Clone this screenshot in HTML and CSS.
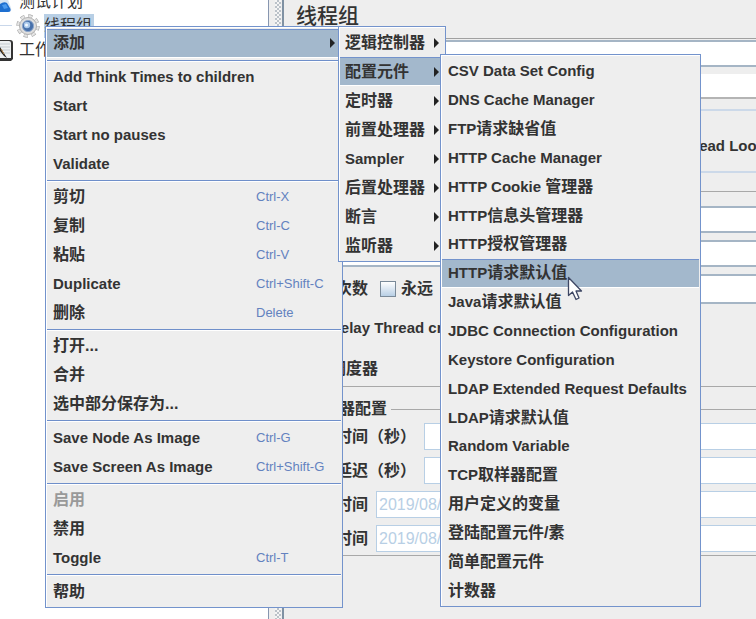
FILE: index.html
```html
<!DOCTYPE html>
<html lang="zh-CN">
<head>
<meta charset="utf-8">
<title>线程组</title>
<link rel="stylesheet" href="styles.css">
</head>
<body>
<div class="window">
  <nav class="tree">
    <div class="node">
      <svg class="icon" width="16" height="24" viewBox="0 0 16 24"><path d="M0 4H6L11 18Q12 22 8 22H0Z" fill="#d5e3f2"/><path d="M0 14Q4 11 7 13L10.500 19Q11 22 8 22H0Z" fill="#1e6fd0"/><path d="M2 15L6 14L8 18L4 19Z" fill="#4b9bf0"/></svg>
      <span class="node-label">测试计划</span>
    </div>
    <div class="node child">
      <svg class="gear" width="24" height="24" viewBox="0 0 24 24"><circle cx="12" cy="12" r="9.7" fill="none" stroke="#a9a9a9" stroke-width="4" stroke-dasharray="4.1 3.5"/><circle cx="12" cy="12" r="9.7" fill="none" stroke="#e6e6e6" stroke-width="2.6" stroke-dasharray="3.3 4.3" stroke-dashoffset="-.4"/><circle cx="12" cy="12" r="8.5" fill="#dedede" stroke="#b2b2b2"/><circle cx="12" cy="12" r="5.6" fill="#4770aa" stroke="#8ba5ca"/><circle cx="11" cy="11" r="3.2" fill="#a9c8eb"/><circle cx="10.500" cy="11" r="1.500" fill="#f2f8ff"/></svg>
      <span class="node-label selected">线程组</span>
    </div>
    <div class="node">
      <svg class="icon" width="16" height="24" viewBox="0 0 16 24"><path d="M0 2H10Q13 2 13 5V21L11 23H0" fill="#333"/><path d="M0 3H9Q11 3 11 5V20H0Z" fill="#edf0f2"/><path d="M0 6H10M0 9H10M0 12H10M0 15H10" stroke="#c5ccd2"/><path d="M0 9L7 20L4 18L0 13" fill="#222"/><path d="M1 11L4 16" stroke="#b6864a"/></svg>
      <span class="node-label">工作台</span>
    </div>
  </nav>
  <div class="divider"><div class="grip"></div></div>
  <main class="editor">
    <h1 class="title">线程组</h1>
    <input class="field name" type="text" aria-label="名称">
    <input class="comment" type="text" aria-label="注释">
    <section class="on-error">
      <label class="choice"><input type="radio" name="error">Start Next Thread Loop</label>
    </section>
    <section class="properties">
      <input class="field" type="text" aria-label="线程数">
      <input class="field" type="text" aria-label="Ramp-Up">
      <div class="row loops">
        <label for="loops">循环次数</label>
        <label class="choice cjk"><input type="checkbox">永远</label>
        <input class="field" id="loops" type="text">
      </div>
      <label class="choice line"><input type="checkbox">Delay Thread creation</label>
      <label class="choice line cjk"><input type="checkbox">调度器</label>
    </section>
    <fieldset class="scheduler">
      <legend>调度器配置</legend>
      <div class="row"><label for="duration">持续时间（秒）</label><input class="field pale" id="duration" type="text"></div>
      <div class="row"><label for="delay">启动延迟（秒）</label><input class="field pale" id="delay" type="text"></div>
      <div class="row"><label for="start">启动时间</label><input class="field pale" id="start" type="text" value="2019/08/08"></div>
      <div class="row"><label for="end">结束时间</label><input class="field pale" id="end" type="text" value="2019/08/08"></div>
    </fieldset>
  </main>
</div>

<div class="menu main-menu" role="menu">
  <button class="item cjk active">添加<i class="arrow"></i></button>
  <hr>
  <button class="item">Add Think Times to children</button>
  <button class="item">Start</button>
  <button class="item">Start no pauses</button>
  <button class="item">Validate</button>
  <hr>
  <button class="item cjk">剪切<kbd>Ctrl-X</kbd></button>
  <button class="item cjk">复制<kbd>Ctrl-C</kbd></button>
  <button class="item cjk">粘贴<kbd>Ctrl-V</kbd></button>
  <button class="item">Duplicate<kbd>Ctrl+Shift-C</kbd></button>
  <button class="item cjk">删除<kbd>Delete</kbd></button>
  <hr>
  <button class="item cjk">打开...</button>
  <button class="item cjk">合并</button>
  <button class="item cjk">选中部分保存为...</button>
  <hr>
  <button class="item">Save Node As Image<kbd>Ctrl-G</kbd></button>
  <button class="item">Save Screen As Image<kbd>Ctrl+Shift-G</kbd></button>
  <hr>
  <button class="item cjk" disabled>启用</button>
  <button class="item cjk">禁用</button>
  <button class="item">Toggle<kbd>Ctrl-T</kbd></button>
  <hr>
  <button class="item cjk">帮助</button>
</div>

<div class="menu add-menu" role="menu">
  <button class="item cjk">逻辑控制器<i class="arrow"></i></button>
  <button class="item cjk active">配置元件<i class="arrow"></i></button>
  <button class="item cjk">定时器<i class="arrow"></i></button>
  <button class="item cjk">前置处理器<i class="arrow"></i></button>
  <button class="item">Sampler<i class="arrow"></i></button>
  <button class="item cjk">后置处理器<i class="arrow"></i></button>
  <button class="item cjk">断言<i class="arrow"></i></button>
  <button class="item cjk">监听器<i class="arrow"></i></button>
</div>

<div class="menu config-menu" role="menu">
  <button class="item">CSV Data Set Config</button>
  <button class="item">DNS Cache Manager</button>
  <button class="item">FTP<span class="cjk">请求缺省值</span></button>
  <button class="item">HTTP Cache Manager</button>
  <button class="item">HTTP Cookie <span class="cjk">管理器</span></button>
  <button class="item">HTTP<span class="cjk">信息头管理器</span></button>
  <button class="item">HTTP<span class="cjk">授权管理器</span></button>
  <button class="item active">HTTP<span class="cjk">请求默认值</span></button>
  <button class="item">Java<span class="cjk">请求默认值</span></button>
  <button class="item">JDBC Connection Configuration</button>
  <button class="item">Keystore Configuration</button>
  <button class="item">LDAP Extended Request Defaults</button>
  <button class="item">LDAP<span class="cjk">请求默认值</span></button>
  <button class="item">Random Variable</button>
  <button class="item">TCP<span class="cjk">取样器配置</span></button>
  <button class="item cjk">用户定义的变量</button>
  <button class="item cjk">登陆配置元件/素</button>
  <button class="item cjk">简单配置元件</button>
  <button class="item cjk">计数器</button>
</div>

<svg class="cursor" width="16" height="26" viewBox="0 0 16 26"><path d="M1.500 1.500V19.500L5.500 16L9 23.500L12 22L9 15H14.500Z" fill="#fff" stroke="#3d4663" stroke-width="1.300" stroke-linejoin="round"/></svg>
</body>
</html>
```
FILE: styles.css
```css
* {
  box-sizing: border-box;
}

body {
  margin: 0;
  height: 100vh;
  overflow: hidden;
  background: #eee;
  color: #333;
  font: bold 15px/20px "Liberation Sans", "Noto Sans CJK SC", sans-serif;
}

button,
input {
  font: inherit;
  color: inherit;
  margin: 0;
}

.cjk {
  font-size: 16px;
}

.window {
  display: flex;
  height: 100%;
}

/* Test plan tree */
.tree {
  flex: 0 0 268px;
  overflow: hidden;
  background: #fff;
  font-size: 16px;
  font-weight: normal;
}

.node {
  display: flex;
  align-items: center;
  height: 24px;
  gap: 3px;
}

.node:first-child {
  margin-top: -10px;
}

.node svg {
  flex: none;
}

.child {
  gap: 4px;
  padding-left: 16px;
  background: linear-gradient(#c9d7ea, #c9d7ea) 0 11px / 12px 1px no-repeat;
}

.selected {
  height: 24px;
  padding-right: 2px;
  background: #b8cfe5;
  line-height: 24px;
}

.divider {
  flex: 0 0 15px;
  padding: 0 1px 0 6px;
  border-left: 1px solid #8796b0;
  border-right: 2px solid #7f91a3;
}

.grip {
  width: 6px;
  height: 100%;
  background:
    conic-gradient(#9aa5b2 25%, transparent 0) 0 0 / 4px 4px,
    conic-gradient(#9aa5b2 25%, transparent 0) 2px 2px / 4px 4px,
    #fafafa;
  background-size: 4px 4px;
  opacity: .6;
}

/* Thread group editor */
.editor {
  display: flex;
  flex-direction: column;
  flex: 1;
  min-width: 0;
}

.title {
  flex: none;
  height: 39px;
  margin: 0 0 1px;
  padding: 3px 12px;
  border-bottom: 1px solid #a0a0a0;
  font-size: 21px;
  font-weight: 500;
  line-height: 26px;
}

.field {
  display: block;
  width: 100%;
  height: 27px;
  padding: 0 2px;
  border: 2px solid #a5b5c5;
  border-right: 0;
  background: #fff;
}

.comment {
  height: 25px;
  margin-top: 7px;
  border: 0;
  border-bottom: 2px solid #b4b4b4;
  background: #fff;
}

.on-error {
  display: flex;
  align-items: center;
  height: 64px;
  margin-top: 10px;
  padding: 10px 0 0 298px;
  border-top: 2px solid #ccd9e9;
  border-bottom: 2px solid #ccd9e9;
}

.choice {
  display: flex;
  flex: none;
  align-items: center;
  gap: 5px;
  white-space: nowrap;
}

input[type="checkbox"] {
  appearance: none;
  width: 16px;
  height: 16px;
  border: 1px solid #7a8a99;
  background: linear-gradient(#fff, #b8cfe5);
}

.properties {
  display: flex;
  flex-direction: column;
  gap: 7px;
  margin-top: 18px;
  padding-top: 14px;
  border-top: 1px solid #a8a8a8;
  border-bottom: 1px solid #a8a8a8;
}

.row {
  display: flex;
  align-items: center;
  gap: 8px;
  padding-left: 20px;
  font-size: 16px;
}

.row label {
  flex: none;
}

.row .field {
  flex: 1;
  min-width: 0;
}

.loops {
  gap: 12px;
}

.loops .field {
  height: 30px;
}

.line {
  height: 34px;
  padding-left: 25px;
}

.scheduler {
  display: flex;
  flex-direction: column;
  gap: 7px;
  min-width: 0;
  margin: 12px 0 0;
  padding: 4px 0 3px;
  border: 0 solid #a8a8a8;
  border-width: 1px 0;
}

.scheduler legend {
  margin-left: 20px;
  padding: 0 4px 0 3px;
  font-size: 16px;
}

.pale {
  border-width: 1px;
  border-color: #b8cfe5;
  color: #b8cfe5;
  font-weight: normal;
}

/* Popup menus */
.menu {
  position: absolute;
  display: flex;
  flex-direction: column;
  padding: 1px;
  border: 1px solid #7393cc;
  background: #eee;
  box-shadow: inset 1px 1px #fff;
}

.main-menu {
  left: 45px;
  top: 26px;
  width: 298px;
  height: 582px;
}

.add-menu {
  left: 338px;
  top: 26px;
  width: 108px;
  height: 236px;
}

.config-menu {
  left: 440px;
  top: 54px;
  width: 261px;
  height: 553px;
}

.menu.config-menu,
.menu.main-menu {
  padding-top: 2px;
}

.item {
  display: flex;
  flex: 1 1 0;
  align-items: center;
  min-height: 0;
  padding: 0 6px;
  border: 0 solid transparent;
  border-width: 1px 0;
  background: none;
  text-align: left;
  white-space: pre;
}

.add-menu .item {
  padding: 0 5px;
}

.item:disabled {
  color: #999;
}

.active {
  border-top-color: #7393cc;
  border-bottom-color: #fff;
  background: #a3b8cc;
}

.menu hr {
  flex: none;
  width: 100%;
  height: 2px;
  margin: 2px 0 1px;
  border: 0;
  border-top: 1px solid #6f8fca;
  background: #fff;
}

.item kbd {
  width: 79px;
  margin-left: auto;
  color: #6382bf;
  font: 13px/20px "Liberation Sans", sans-serif;
}

.arrow {
  width: 0;
  height: 0;
  margin-left: auto;
  border: 5px solid transparent;
  border-right: 0;
  border-left-color: #222;
}

.cursor {
  position: absolute;
  left: 567px;
  top: 276px;
}
```
